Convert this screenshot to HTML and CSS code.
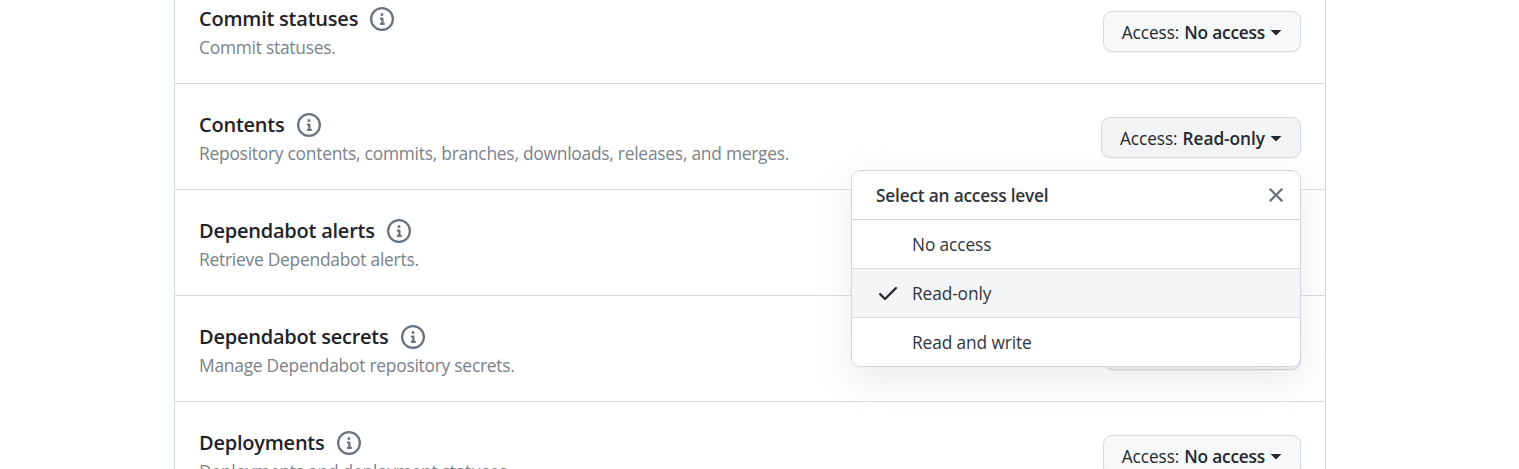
FILE: index.html
```html
<!DOCTYPE html>
<html lang="en">
<head>
<meta charset="utf-8">
<title>Repository permissions</title>
<link rel="stylesheet" href="styles.css">
</head>
<body>
<svg class="sprite" aria-hidden="true">
  <symbol id="info" viewBox="0 0 16 16"><path fill-rule="evenodd" d="M8 1.5a6.5 6.5 0 100 13 6.5 6.5 0 000-13zM0 8a8 8 0 1116 0A8 8 0 010 8zm6.5-.25A.75.75 0 017.25 7h1a.75.75 0 01.75.75v2.75h.25a.75.75 0 010 1.5h-2a.75.75 0 010-1.5h.25v-2h-.25a.75.75 0 01-.75-.75zM8 6a1 1 0 100-2 1 1 0 000 2z"/></symbol>
  <symbol id="check" viewBox="0 0 16 16"><path fill-rule="evenodd" d="M13.78 4.22a.75.75 0 010 1.06l-7.25 7.25a.75.75 0 01-1.06 0L2.22 9.28a.75.75 0 011.06-1.06L6 10.94l6.72-6.72a.75.75 0 011.06 0z"/></symbol>
  <symbol id="close" viewBox="0 0 16 16"><path fill-rule="evenodd" d="M3.72 3.72a.75.75 0 011.06 0L8 6.94l3.22-3.22a.75.75 0 111.06 1.06L9.06 8l3.22 3.22a.75.75 0 11-1.06 1.06L8 9.06l-3.22 3.22a.75.75 0 01-1.06-1.06L6.94 8 3.72 4.78a.75.75 0 010-1.06z"/></symbol>
</svg>
<main class="permissions">
  <section class="row">
    <div class="info">
      <div class="heading"><h2 class="title">Commit statuses</h2><svg class="icon"><use href="#info"/></svg></div>
      <p class="desc">Commit statuses.</p>
    </div>
    <div class="picker"><button class="btn"><span class="label">Access:</span><b class="value">No access</b><i class="caret"></i></button></div>
  </section>
  <section class="row">
    <div class="info">
      <div class="heading"><h2 class="title">Contents</h2><svg class="icon"><use href="#info"/></svg></div>
      <p class="desc">Repository contents, commits, branches, downloads, releases, and merges.</p>
    </div>
    <div class="picker">
      <button class="btn btn-open"><span class="label">Access:</span><b class="value">Read-only</b><i class="caret"></i></button>
      <div class="menu">
        <div class="menu-header"><span class="menu-title">Select an access level</span><svg class="icon"><use href="#close"/></svg></div>
        <div class="menu-item"><span class="mark"></span><span>No access</span></div>
        <div class="menu-item selected"><svg class="mark"><use href="#check"/></svg><span>Read-only</span></div>
        <div class="menu-item"><span class="mark"></span><span>Read and write</span></div>
      </div>
    </div>
  </section>
  <section class="row">
    <div class="info">
      <div class="heading"><h2 class="title">Dependabot alerts</h2><svg class="icon"><use href="#info"/></svg></div>
      <p class="desc">Retrieve Dependabot alerts.</p>
    </div>
    <div class="picker"><button class="btn"><span class="label">Access:</span><b class="value">No access</b><i class="caret"></i></button></div>
  </section>
  <section class="row">
    <div class="info">
      <div class="heading"><h2 class="title">Dependabot secrets</h2><svg class="icon"><use href="#info"/></svg></div>
      <p class="desc">Manage Dependabot repository secrets.</p>
    </div>
    <div class="picker"><button class="btn"><span class="label">Access:</span><b class="value">No access</b><i class="caret"></i></button></div>
  </section>
  <section class="row">
    <div class="info">
      <div class="heading"><h2 class="title">Deployments</h2><svg class="icon"><use href="#info"/></svg></div>
      <p class="desc">Deployments and deployment statuses.</p>
    </div>
    <div class="picker"><button class="btn"><span class="label">Access:</span><b class="value">No access</b><i class="caret"></i></button></div>
  </section>
</main>
</body>
</html>
```
FILE: styles.css
```css
* { box-sizing: border-box; }
html { overflow: hidden; }
body {
  margin: 0;
  height: 469px;
  overflow: hidden;
  background: #fff;
  color: #30353b;
  font: 400 17.3px/27px "Open Sans", "Noto Sans", sans-serif;
}
.sprite { display: none; }
.permissions {
  width: 1152px;
  height: 491px;
  overflow: hidden;
  margin: -22px 0 0 174px;
  border: solid #d0d7de;
  border-width: 0 1px;
}
.row {
  display: flex;
  justify-content: space-between;
  align-items: flex-start;
  height: 106px;
  padding: 25px 24px 0;
  border-bottom: 1px solid #d8dbdf;
}
.heading { display: flex; align-items: center; gap: 12px; height: 32px; }
.title {
  margin: 0;
  font-size: 20px;
  font-weight: 600;
  line-height: 32px;
  letter-spacing: -.23px;
  color: #1f2328;
  white-space: nowrap;
}
.icon { display: block; width: 24px; height: 24px; fill: #6a727b; }
.desc { margin: -1px 0 0; font-size: 17.4px; line-height: 26px; letter-spacing: -.25px; color: #7a828a; white-space: nowrap; }
.picker { position: relative; padding-top: 8px; }
.btn {
  display: flex;
  align-items: center;
  justify-content: flex-end;
  width: 198px;
  height: 41px;
  padding: 2px 18px 0;
  border: 1px solid #d5d8dc;
  border-radius: 9px;
  background: #f6f8fa;
  box-shadow: 0 1px 0 rgba(27, 31, 36, .04);
  color: #24292f;
  font: inherit;
  white-space: nowrap;
}
.btn-open { width: 200px; background: #f3f4f6; }
.label { letter-spacing: -.1px; }
.value { margin-left: 5px; font-weight: 600; letter-spacing: -.2px; }
.btn-open .value { letter-spacing: -.05px; }
.caret {
  flex: none;
  width: 12px;
  height: 6px;
  margin: 0 0 0 5px;
  background: #24292f;
  clip-path: polygon(0 0, 100% 0, 50% 100%);
}
.menu {
  position: absolute;
  z-index: 1;
  top: 61px;
  right: 0;
  width: 450px;
  overflow: hidden;
  border: 1px solid #d0d7de;
  border-radius: 9px;
  background: #fff;
  box-shadow: 0 12px 36px rgba(140, 149, 159, .2);
}
.menu-header, .menu-item { display: flex; align-items: center; height: 49px; border-bottom: 1px solid #d5d9de; }
.menu-header { justify-content: space-between; padding: 0 12px 0 24px; }
.menu-title { font-weight: 600; letter-spacing: -.2px; }
.menu-item { gap: 12px; padding-left: 24px; letter-spacing: -.1px; }
.menu-item:last-child { height: 48px; border-bottom: 0; }
.selected { background: #f4f5f7; }
.mark { width: 24px; height: 24px; fill: #24292f; }
```
